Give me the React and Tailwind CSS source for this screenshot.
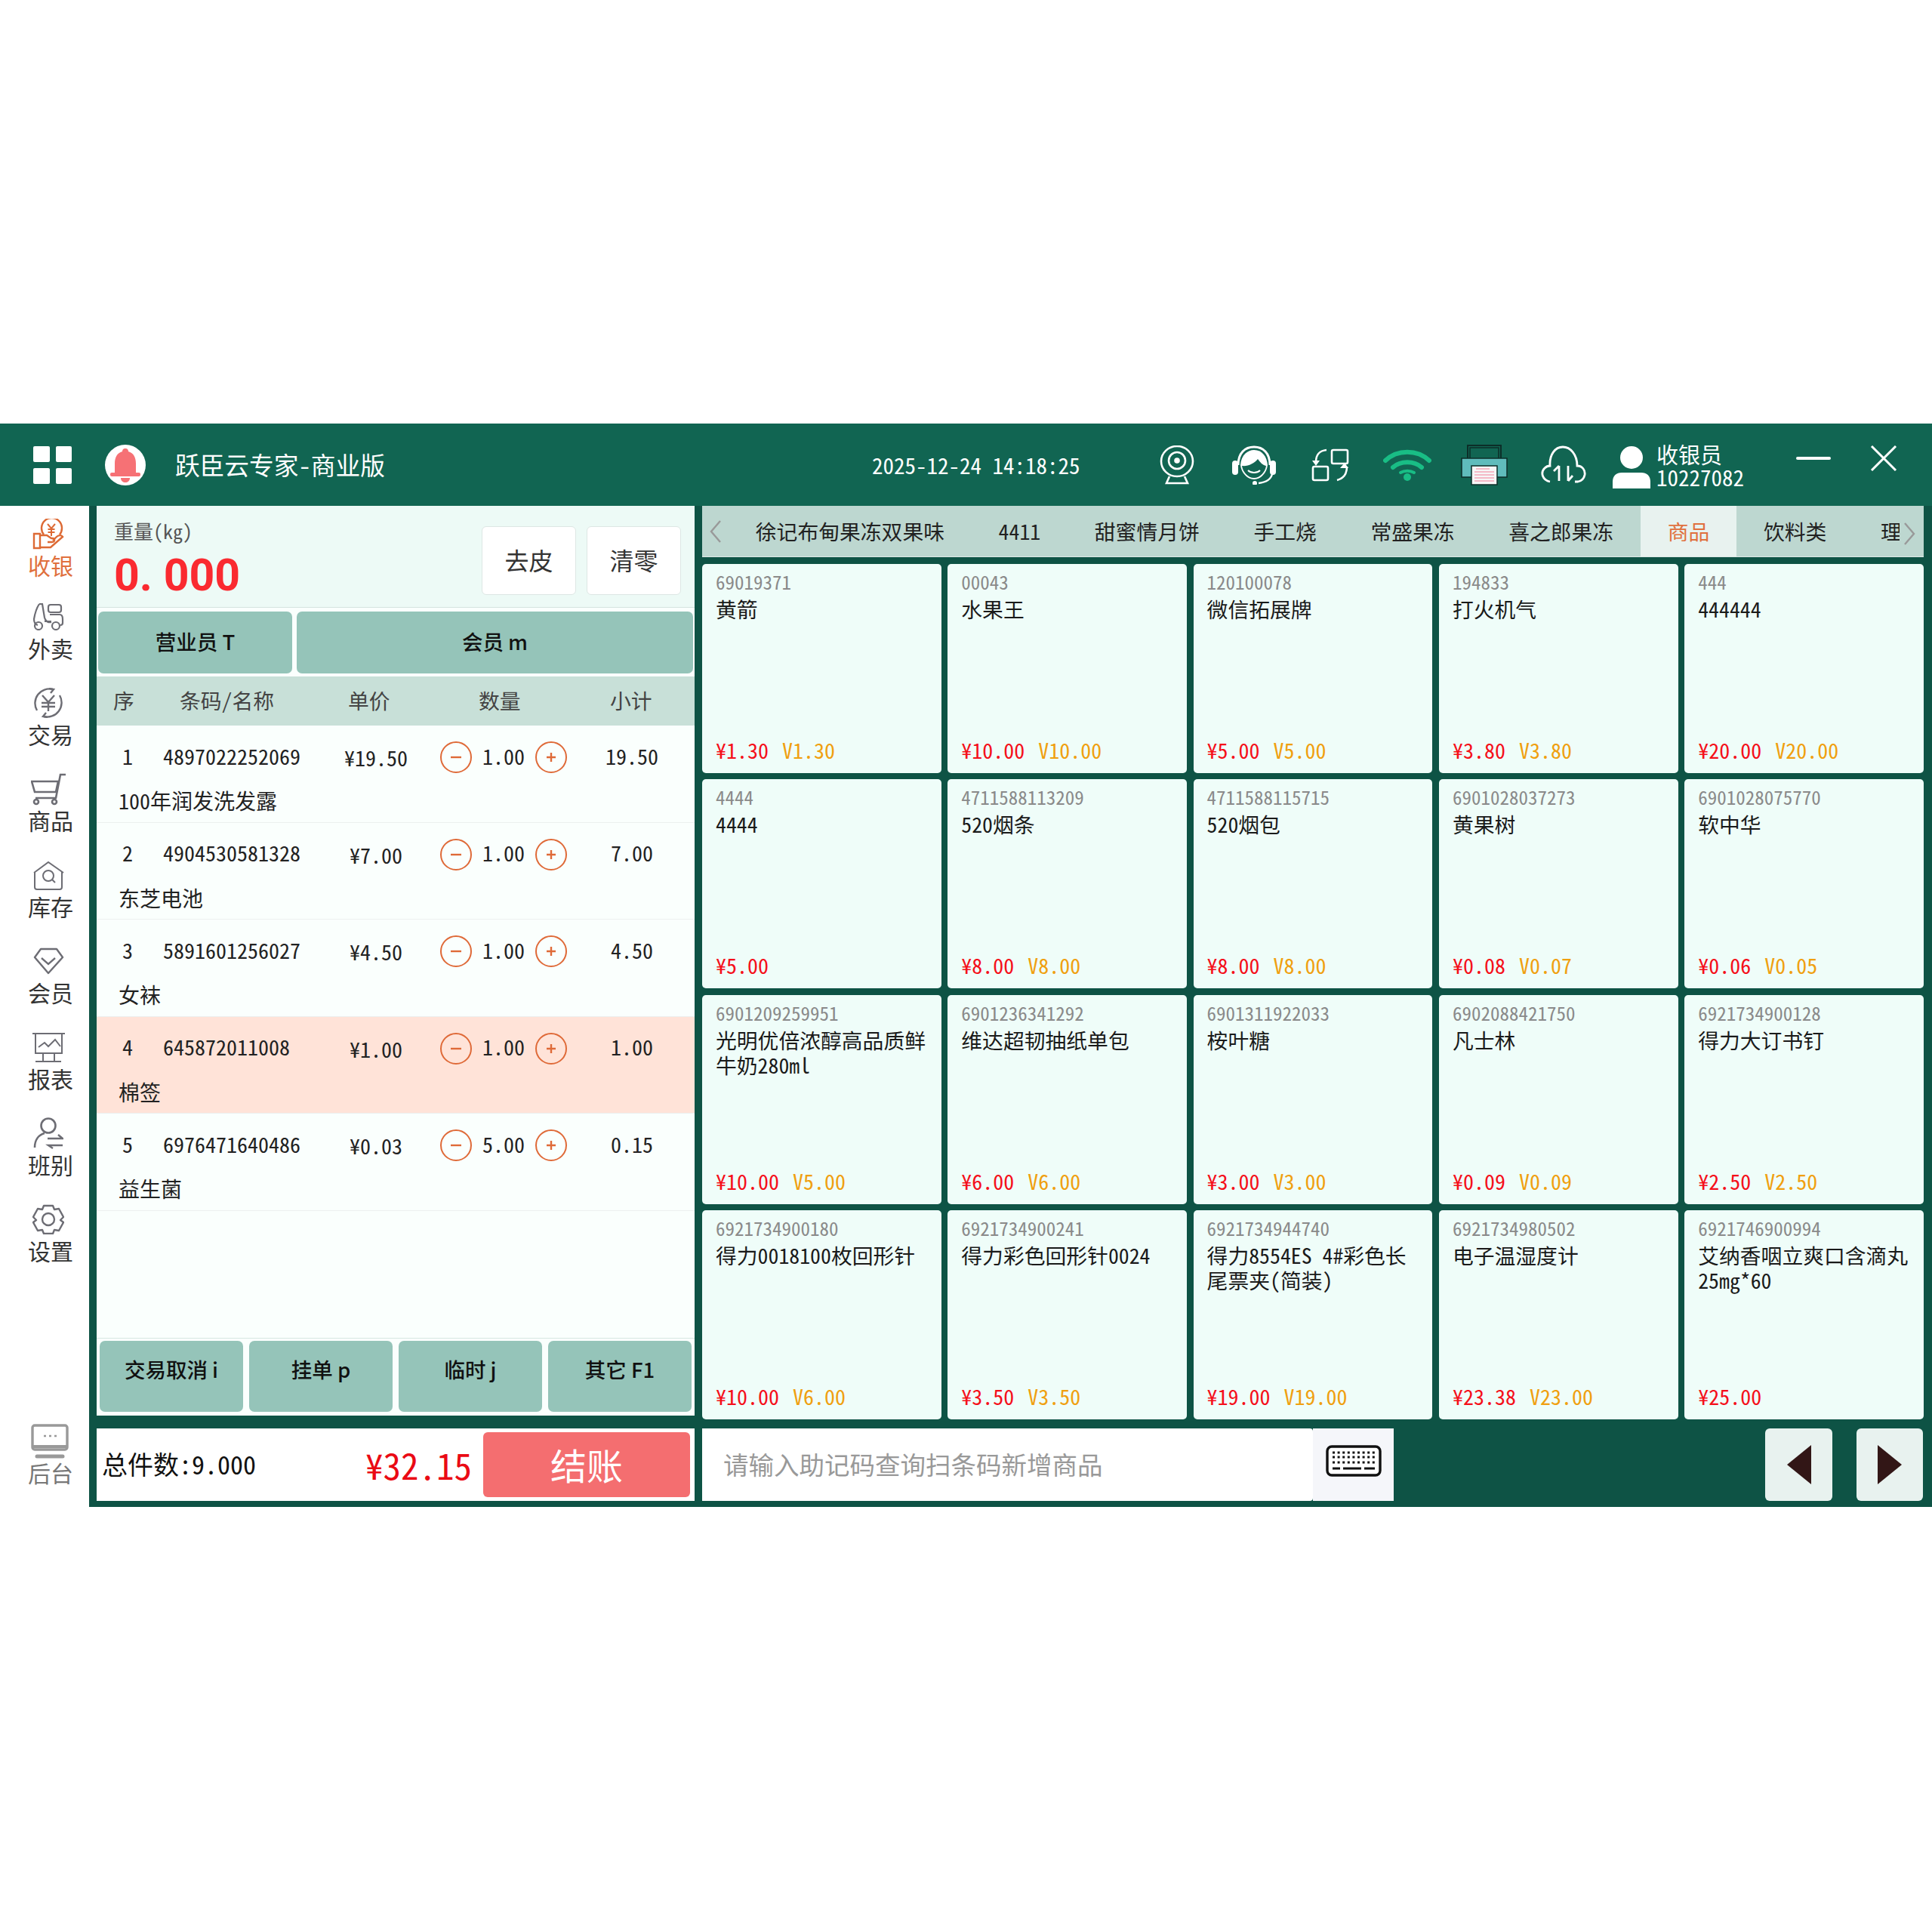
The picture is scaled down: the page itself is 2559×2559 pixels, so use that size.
import React from 'react';

const FONT = "font-['Noto_Sans_Mono_CJK_SC','Noto_Sans_CJK_SC',monospace]";

const Ic = ({ w, h, className, children }) => (
  <svg width={w} height={h} viewBox={`0 0 ${w} ${h}`} fill="none" className={`shrink-0 ${className || ''}`}>{children}</svg>
);

const G = '#6d6d74';

const sideIcons = {
  cash: (
    <Ic w={42} h={41}>
      <g stroke="#dd6a35" strokeWidth="2.4">
        <path d="M15 21A13.5 13.5 0 1 1 36 21" />
        <path d="M20 7l5 6 5-6M25 13v10M20.5 14h9M20.5 18h9" strokeWidth="2" />
        <path d="M2 20h8v19H2zM10 22h9l6 4h2c3 0 3 5-1 5h-6M10 38h14l16-14c-2-3-6-2-8 0l-5 5" />
      </g>
    </Ic>
  ),
  takeout: (
    <Ic w={42} h={36}>
      <g stroke={G} strokeWidth="2.2">
        <path d="M9 1c-4 6-6 14-7 20 0 4 1 7 5 8M9 1h4l3 18c1 5 5 7 9 6M16 24h9" />
        <rect x="21" y="2" width="17" height="10" rx="3" />
        <path d="M23 15h13c3 0 4 3 4 6v5c0 2-1 3-3 3" />
        <circle cx="8" cy="30" r="5" />
        <circle cx="31" cy="30" r="5" />
      </g>
    </Ic>
  ),
  trade: (
    <Ic w={42} h={40}>
      <g stroke={G} strokeWidth="2.4">
        <path d="M6 30A19 19 0 0 1 27 2M36 10a19 19 0 0 1-21 28" />
        <path d="M22 1l6 1-4 5M20 39l-6-1 4-5" />
        <path d="M13 10l8 9 8-9M21 19v12M12 20h18M12 25h18" />
      </g>
    </Ic>
  ),
  goods: (
    <Ic w={47} h={43}>
      <g stroke={G} strokeWidth="2.6">
        <path d="M46 2h-7l-6 31H6" />
        <path d="M1 11h35l-3 14H5z" fill="none" />
        <circle cx="7" cy="38" r="3" />
        <circle cx="31" cy="38" r="3" />
      </g>
    </Ic>
  ),
  stock: (
    <Ic w={41} h={39}>
      <g stroke={G} strokeWidth="2">
        <path d="M1 16L20 2l20 14" />
        <path d="M2 15v20c0 2 1 3 3 3h30c2 0 3-1 3-3V15" />
        <circle cx="20" cy="20" r="7" />
        <path d="M25 25l4 4" />
      </g>
    </Ic>
  ),
  member: (
    <Ic w={41} h={36}>
      <g stroke={G} strokeWidth="2.4">
        <path d="M10 2h21l8 11-19 21L2 13z" strokeLinejoin="round" />
        <path d="M11 14l9 8 9-8" />
      </g>
    </Ic>
  ),
  report: (
    <Ic w={43} h={39}>
      <g stroke={G} strokeWidth="2">
        <path d="M0 1h43" strokeWidth="2.2" />
        <path d="M4 2v25h35V2" />
        <path d="M8 19l8-6 5 5 9-9 7 9" />
        <path d="M14 28v9M29 28v9M4 38h34" />
      </g>
    </Ic>
  ),
  shift: (
    <Ic w={40} h={42}>
      <g stroke={G} strokeWidth="2.6">
        <circle cx="20" cy="11" r="9.5" />
        <path d="M2 40c0-11 6-17 13-19" />
        <path d="M19 28h20l-6-5M39 37H20l6 4" strokeWidth="2.4" />
      </g>
    </Ic>
  ),
  setting: (
    <Ic w={42} h={40}>
      <g stroke={G} strokeWidth="2.4" strokeLinejoin="round">
        <path d="M15 2h12l2 5 6-1 6 11-4 4 4 3-6 11-6-1-2 5H15l-2-5-6 1-6-11 4-3-4-4L7 6l6 1z" />
        <circle cx="21" cy="20" r="8" />
      </g>
    </Ic>
  ),
};

const sideItems = [
  { icon: 'cash', label: '收银', active: true },
  { icon: 'takeout', label: '外卖' },
  { icon: 'trade', label: '交易' },
  { icon: 'goods', label: '商品' },
  { icon: 'stock', label: '库存' },
  { icon: 'member', label: '会员' },
  { icon: 'report', label: '报表' },
  { icon: 'shift', label: '班别' },
  { icon: 'setting', label: '设置' },
];

const orderRows = [
  { no: 1, code: '4897022252069', price: '¥19.50', qty: '1.00', sub: '19.50', name: '100年润发洗发露' },
  { no: 2, code: '4904530581328', price: '¥7.00', qty: '1.00', sub: '7.00', name: '东芝电池' },
  { no: 3, code: '5891601256027', price: '¥4.50', qty: '1.00', sub: '4.50', name: '女袜' },
  { no: 4, code: '645872011008', price: '¥1.00', qty: '1.00', sub: '1.00', name: '棉签', on: true },
  { no: 5, code: '6976471640486', price: '¥0.03', qty: '5.00', sub: '0.15', name: '益生菌' },
];

const tabs = ['徐记布甸果冻双果味', '4411', '甜蜜情月饼', '手工烧', '常盛果冻', '喜之郎果冻', '商品', '饮料类', '理'];

const goods = [
  ['69019371', '黄箭', '¥1.30', 'V1.30'],
  ['00043', '水果王', '¥10.00', 'V10.00'],
  ['120100078', '微信拓展牌', '¥5.00', 'V5.00'],
  ['194833', '打火机气', '¥3.80', 'V3.80'],
  ['444', '444444', '¥20.00', 'V20.00'],
  ['4444', '4444', '¥5.00', ''],
  ['4711588113209', '520烟条', '¥8.00', 'V8.00'],
  ['4711588115715', '520烟包', '¥8.00', 'V8.00'],
  ['6901028037273', '黄果树', '¥0.08', 'V0.07'],
  ['6901028075770', '软中华', '¥0.06', 'V0.05'],
  ['6901209259951', '光明优倍浓醇高品质鲜牛奶280ml', '¥10.00', 'V5.00'],
  ['6901236341292', '维达超韧抽纸单包', '¥6.00', 'V6.00'],
  ['6901311922033', '桉叶糖', '¥3.00', 'V3.00'],
  ['6902088421750', '凡士林', '¥0.09', 'V0.09'],
  ['6921734900128', '得力大订书钉', '¥2.50', 'V2.50'],
  ['6921734900180', '得力0018100枚回形针', '¥10.00', 'V6.00'],
  ['6921734900241', '得力彩色回形针0024', '¥3.50', 'V3.50'],
  ['6921734944740', '得力8554ES 4#彩色长尾票夹(简装)', '¥19.00', 'V19.00'],
  ['6921734980502', '电子温湿度计', '¥23.38', 'V23.00'],
  ['6921746900994', '艾纳香咽立爽口含滴丸25mg*60', '¥25.00', ''],
];

const QtyBtn = ({ plus }) => (
  <div className="w-[42px] h-[42px] rounded-full border-2 border-[#df6a38] flex items-center justify-center shrink-0">
    <Ic w={16} h={16}>
      <path d={plus ? 'M2 8h12M8 2v12' : 'M1 8h14'} stroke="#df6a38" strokeWidth="2.4" />
    </Ic>
  </div>
);

const OrderRow = ({ row }) => (
  <div className={`h-[128.6px] border-b border-[#ecf0ef] text-[28px] text-[#222] ${row.on ? 'bg-[#ffe3d8]' : ''}`}>
    <div className="flex items-center h-[84px]">
      <div className="w-[88px] pr-[6px] pb-[5px] text-center">{row.no}</div>
      <div className="w-[214px] pb-[5px]">{row.code}</div>
      <div className="w-[136px] text-center">{row.price}</div>
      <div className="w-[204px] pl-[17px] flex items-center">
        <QtyBtn />
        <div className="w-[84px] pb-[5px] text-center">{row.qty}</div>
        <QtyBtn plus />
      </div>
      <div className="w-[134px] pb-[5px] text-center">{row.sub}</div>
    </div>
    <div className="pl-[29px] h-[36px] leading-[30px]">{row.name}</div>
  </div>
);

const GoodsCard = ({ item }) => (
  <div className="h-[277px] rounded-[5px] bg-[#effdf9] px-[18px] flex flex-col">
    <div className="pt-[8px] text-[25px] leading-[30px] text-[#8a8a8a]">{item[0]}</div>
    <div className="mt-[5px] text-[27.8px] leading-[33px] text-[#1a1a1a] break-all">{item[1]}</div>
    <div className="mt-auto pb-[15px] flex gap-[18px] text-[28px] leading-[32px]">
      <span className="text-[#f50f1a]">{item[2]}</span>
      <span className="text-[#f0a010]">{item[3]}</span>
    </div>
  </div>
);

const ActionBtn = ({ children, className }) => (
  <div className={`bg-[#95c4b9] rounded-[7px] font-['Noto_Sans_CJK_SC',sans-serif] text-[27.5px] font-medium text-[#111] flex justify-center whitespace-pre ${className}`}>
    {children}
  </div>
);

const HeaderIcons = () => (
  <>
    {/* camera */}
    <Ic w={46} h={52} className="ml-[103px]">
      <g stroke="#fff" strokeWidth="2.6">
        <ellipse cx="23" cy="21" rx="21" ry="20" />
        <ellipse cx="23" cy="20" rx="11" ry="11" />
        <circle cx="23" cy="20" r="2.5" fill="#fff" />
        <path d="M13 41l-4 9h28l-4-9" />
      </g>
    </Ic>
    {/* headset */}
    <Ic w={60} h={52} className="ml-[49px]">
      <path d="M9 26C9 10 18 2 30 2s21 8 21 24" stroke="#fff" strokeWidth="3" />
      <rect x="1" y="20" width="8" height="19" rx="4" fill="#fff" />
      <rect x="51" y="20" width="8" height="19" rx="4" fill="#fff" />
      <path d="M12 26C13 12 22 6 30 6c11 0 17 9 18 20-1 10-9 19-18 19S13 36 12 26z" fill="#fff" />
      <path d="M14 27c8 1 16-3 21-9 3 4 6 8 11 9-1 8-8 16-16 16S15 35 14 27z" fill="#116552" />
      <path d="M22 33c4 4 12 4 16 0" stroke="#fff" strokeWidth="2" />
      <path d="M54 38c-2 8-10 11-18 12" stroke="#fff" strokeWidth="2.4" />
      <circle cx="31" cy="50" r="3" fill="#fff" />
    </Ic>
    {/* swap */}
    <Ic w={50} h={44} className="ml-[46px]">
      <g stroke="#fff" strokeWidth="2.6">
        <rect x="27" y="2" width="21" height="18" rx="2" />
        <rect x="2" y="24" width="20" height="18" rx="2" />
        <path d="M20 2C11 3 6 7 6 18M47 24c0 10-5 16-13 18" />
      </g>
      <path d="M1 16h10l-5 7zM38 26h11l-5-7z" fill="#fff" />
    </Ic>
    {/* wifi */}
    <Ic w={64} h={42} className="ml-[45px]">
      <g stroke="#19bd85" strokeWidth="6" strokeLinecap="round">
        <path d="M3 15C19 0 45 0 61 15" />
        <path d="M13 24C23 15 41 15 51 24" />
        <path d="M23 31C28 28 36 28 41 31" strokeWidth="4" />
      </g>
      <circle cx="32" cy="37" r="5" fill="#19bd85" />
    </Ic>
    {/* printer */}
    <Ic w={62} h={54} className="ml-[39px]">
      <path d="M9 1h44v18H9z" stroke="#0c2e28" strokeWidth="2" />
      <path d="M12 4h38v15H12z" stroke="#0c2e28" strokeWidth="1.5" />
      <rect x="1" y="18" width="60" height="25" fill="#60bcbc" stroke="#0c2e28" strokeWidth="1.5" />
      <rect x="14" y="28" width="34" height="25" fill="#f6f6f6" stroke="#0c2e28" strokeWidth="1.5" />
      <path d="M20 32h18M18 36h26M18 40h26M18 44h26M18 48h26" stroke="#f4a6b8" strokeWidth="1.6" />
    </Ic>
    {/* cloud */}
    <Ic w={60} h={52} className="ml-[44px]">
      <g stroke="#fff" strokeWidth="2.8">
        <path d="M12 48C2 46-1 36 5 30c2-2 4-3 7-3C11 12 19 2 29 2s19 10 19 25c7 0 11 6 10 12-1 5-4 8-9 9h-4" />
        <path d="M24 27v20M24 27l-7 7M36 27v20M36 47l6-7" />
      </g>
    </Ic>
    {/* user */}
    <Ic w={52} h={56} className="ml-[34px] mt-[6px]">
      <ellipse cx="26" cy="15" rx="15" ry="15" fill="#fff" />
      <path d="M1 56V47c0-8 5-12 12-12h26c7 0 12 4 12 12v9z" fill="#fff" />
    </Ic>
  </>
);

export default function App() {
  return (
    <div className={`h-[2559px] bg-white pt-[561px] ${FONT}`}>
      <div className="h-[1435px] flex flex-col">
        {/* HEADER */}
        <header className="h-[109px] bg-[#116552] flex items-center text-white shrink-0">
          <div className="ml-[44px] shrink-0 grid grid-cols-2 gap-[8px]">
            <div className="w-[22px] h-[21px] rounded-[2px] bg-white" />
            <div className="w-[21px] h-[21px] rounded-[2px] bg-white" />
            <div className="w-[22px] h-[21px] rounded-[2px] bg-white" />
            <div className="w-[21px] h-[21px] rounded-[2px] bg-white" />
          </div>
          <div className="ml-[43px] shrink-0 w-[54px] h-[54px] rounded-full bg-white flex items-center justify-center">
            <Ic w={44} h={46}>
              <path d="M22 1c3 0 4 2 4 4 7 2 10 8 10 16v13H8V21C8 13 11 7 18 5c0-2 1-4 4-4z" fill="#f67175" />
              <rect x="2" y="33" width="40" height="5" rx="2" fill="#f67175" />
              <path d="M16 40h12c0 4-3 6-6 6s-6-2-6-6z" fill="#f67175" />
            </Ic>
          </div>
          <div className="ml-[39px] w-[923px] shrink-0 pb-[2px] text-[32.7px] whitespace-nowrap">跃臣云专家-商业版</div>
          <div className="w-[278px] shrink-0 text-[29px] whitespace-nowrap">2025-12-24 14:18:25</div>
          <HeaderIcons />
          <div className="ml-[7px] w-[185px] shrink-0 text-[29px] leading-[30px]">
            <div>收银员</div>
            <div>10227082</div>
          </div>
          <div className="w-[46px] h-[4px] shrink-0 rounded-full bg-white mb-[18px]" />
          <Ic w={36} h={34} className="ml-[52px] mb-[18px]">
            <path d="M2 1l32 32M34 1L2 33" stroke="#fff" strokeWidth="3" />
          </Ic>
        </header>

        <div className="flex-1 flex min-h-0">
          {/* SIDEBAR */}
          <aside className="w-[118px] shrink-0 bg-white pt-[14px] pl-[37px] pb-[28px] flex flex-col">
            {sideItems.map((it) => (
              <div key={it.label} className="mb-[32px] first:mb-[28px] flex flex-col">
                <div className="h-[46px] w-[60px] -ml-[3px] flex items-center justify-center">{sideIcons[it.icon]}</div>
                <div className={`h-[36px] w-[60px] leading-[36px] text-[30px] ${it.active ? 'text-[#e0703d]' : 'text-[#333]'}`}>{it.label}</div>
              </div>
            ))}
            <div className="mt-auto flex flex-col">
              <Ic w={50} h={46} className="ml-[4px]">
                <rect x="2" y="2" width="46" height="32" rx="3" stroke="#999" strokeWidth="3.4" />
                <path d="M2 30h46" stroke="#999" strokeWidth="4" />
                <path d="M17 16h3M24 16h3M31 16h3" stroke="#999" strokeWidth="2.4" />
                <path d="M8 43h34" stroke="#999" strokeWidth="5" strokeLinecap="round" />
              </Ic>
              <div className="h-[36px] w-[60px] leading-[36px] text-[30px] text-[#777]">后台</div>
            </div>
          </aside>

          {/* MAIN */}
          <main className="flex-1 bg-[#0e5345] flex pl-[10px] gap-[10px] min-w-0">
            {/* LEFT COLUMN */}
            <section className="w-[792px] shrink-0 flex flex-col">
              <div className="h-[1205px] bg-[#fafffd] flex flex-col">
                <div className="h-[135px] bg-[#edfaf6] border-b border-[#d4e4df] pl-[23px] pr-[18px] flex">
                  <div className="flex-1">
                    <div className="mt-[16px] text-[26px] leading-[34px] text-[#555]">重量(kg)</div>
                    <div className="mt-[10px] font-['Roboto',sans-serif] text-[59px] leading-[64px] font-bold text-[#fa2a30]">0. 000</div>
                  </div>
                  <div className="mt-[27px] w-[125px] h-[91px] pb-[3px] rounded-[6px] bg-white border border-[#dde7e4] flex items-center justify-center text-[32px] text-[#333]">去皮</div>
                  <div className="mt-[27px] ml-[14px] w-[125px] h-[91px] pb-[3px] rounded-[6px] bg-white border border-[#dde7e4] flex items-center justify-center text-[32px] text-[#333]">清零</div>
                </div>
                <div className="h-[91px] pt-[5px] pb-[4px] px-[2px] flex gap-[6px]">
                  <ActionBtn className="w-[257px] items-center pb-[2px]">营业员 T</ActionBtn>
                  <ActionBtn className="flex-1 items-center pb-[2px]">会员 m</ActionBtn>
                </div>
                <div className="h-[65px] bg-[#c8e0d8] flex items-center text-[27.8px] text-[#444] pl-[22px] pb-[2px]">
                  <div className="w-[88px]">序</div>
                  <div className="w-[223px]">条码/名称</div>
                  <div className="w-[173px]">单价</div>
                  <div className="w-[174px]">数量</div>
                  <div>小计</div>
                </div>
                <div className="flex-1">
                  {orderRows.map((row) => <OrderRow key={row.no} row={row} />)}
                </div>
                <div className="h-[103px] border-t border-[#d7e6e2] pt-[3px] pb-[5px] px-[4px] flex gap-[8px]">
                  <ActionBtn className="flex-1 pt-[17px]">交易取消 i</ActionBtn>
                  <ActionBtn className="flex-1 pt-[17px]">挂单 p</ActionBtn>
                  <ActionBtn className="flex-1 pt-[17px]">临时 j</ActionBtn>
                  <ActionBtn className="flex-1 pt-[17px]">其它 F1</ActionBtn>
                </div>
              </div>
              <div className="mt-[17px] h-[96px] bg-white flex items-center pl-[7px] pr-[6px]">
                <div className="w-[349px] pb-[3px] text-[34px] text-[#111]">总件数:9.000</div>
                <div className="w-[156px] text-[47px] text-[#ea0a14]">¥32.15</div>
                <div className="flex-1 h-[86px] pb-[3px] rounded-[6px] bg-[#f46e70] text-white text-[48px] flex items-center justify-center">结账</div>
              </div>
            </section>

            {/* RIGHT COLUMN */}
            <section className="flex-1 min-w-0 pr-[11px] flex flex-col">
              <div className="h-[68px] bg-[#bdd7d0] border-b border-[#dfeae7] flex text-[27.8px] text-[#222]">
                <div className="w-[35px] shrink-0 flex items-center justify-center">
                  <Ic w={16} h={30}><path d="M14 1L2 15l12 14" stroke="#999" strokeWidth="2.4" /></Ic>
                </div>
                <div className="flex-1 min-w-0 flex overflow-hidden">
                  {tabs.map((t) => (
                    <div key={t} className={`shrink-0 px-[35.8px] leading-[66px] whitespace-nowrap ${t === '商品' ? 'bg-[#e8f2ef] text-[#e0703d]' : ''}`}>{t}</div>
                  ))}
                </div>
                <div className="w-[32px] shrink-0 flex items-center justify-start">
                  <Ic w={16} h={30} className="ml-[5px] mt-[6px]"><path d="M2 1l12 14L2 29" stroke="#999" strokeWidth="2.4" /></Ic>
                </div>
              </div>
              <div className="pt-[9px] grid grid-cols-5 gap-x-[8.5px] gap-y-[8.3px]">
                {goods.map((g) => <GoodsCard key={g[0]} item={g} />)}
              </div>
              <div className="mt-[12px] h-[96px] flex">
                <div className="w-[809px] pb-[2px] bg-white rounded-r-[4px] flex items-center pl-[28px] text-[33.5px] text-[#999]">请输入助记码查询扫条码新增商品</div>
                <div className="w-[107px] bg-[#f5f6fa] flex items-start justify-center pt-[22px]">
                  <Ic w={74} h={42}>
                    <rect x="2" y="2" width="70" height="38" rx="6" fill="#fff" stroke="#111" strokeWidth="3.4" />
                    <path d="M9 10h56M9 16h56M9 23h56" stroke="#111" strokeWidth="3" strokeDasharray="3 3.6" />
                    <path d="M9 31h10M23 31h24M51 31h14" stroke="#111" strokeWidth="3" />
                  </Ic>
                </div>
                <div className="ml-auto w-[89px] rounded-[6px] bg-[#e8f2ef] flex items-center justify-center">
                  <Ic w={32} h={52}><path d="M32 0v52L0 26z" fill="#321616" /></Ic>
                </div>
                <div className="ml-[32px] mr-[1px] w-[88px] rounded-[6px] bg-[#e8f2ef] flex items-center justify-center">
                  <Ic w={32} h={52}><path d="M0 0v52l32-26z" fill="#321616" /></Ic>
                </div>
              </div>
            </section>
          </main>
        </div>
      </div>
    </div>
  );
}
